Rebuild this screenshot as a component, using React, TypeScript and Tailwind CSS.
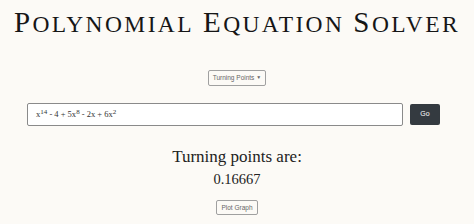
const TITLE = ['Polynomial', 'Equation', 'Solver']

export default function App() {
  return (
    <div className="w-[474px] h-[224px] bg-[#fcfaf6] overflow-hidden flex flex-col items-center" style={{ fontFamily: '"Liberation Serif", serif' }}>
      {/* Title in small caps */}
      <h1 className="mt-[5px] flex gap-[9px] leading-[34px] text-[#161616] tracking-[2.4px] whitespace-nowrap">
        {TITLE.map(word => (
          <span key={word}>
            <span className="text-[29px]">{word[0]}</span>
            <span className="text-[23.5px] uppercase">{word.slice(1)}</span>
          </span>
        ))}
      </h1>

      <button className="mt-[26px] h-[16px] px-[4px] flex items-center gap-[2px] border border-[#a0a0a0] rounded-[2px] text-[6.5px] text-[#666] bg-[#fcfaf6]" style={{ fontFamily: '"Liberation Sans", sans-serif' }}>
        Turning Points
        <span className="text-[5px]">▼</span>
      </button>

      <div className="mt-[17px] w-full flex items-center pl-[27px] gap-[7px]">
        <div className="w-[376px] h-[23px] bg-white border border-[#8a8a8a] rounded-[2px] flex items-center px-[8px] text-[8.5px] text-[#333]">
          <span>x<sup className="text-[7px]">14</sup> - 4 + 5x<sup className="text-[7px]">8</sup> - 2x + 6x<sup className="text-[7px]">2</sup></span>
        </div>
        <button className="w-[30px] h-[21px] bg-[#343a40] rounded-[2px] text-white text-[7px]" style={{ fontFamily: '"Liberation Sans", sans-serif' }}>
          Go
        </button>
      </div>

      <p className="mt-[21px] text-[17px] leading-[20px] text-[#222]">Turning points are:</p>
      <p className="mt-[3px] text-[14.5px] leading-[18px] text-[#222]">0.16667</p>

      <button className="mt-[12px] h-[15px] px-[4px] border border-[#a0a0a0] rounded-[2px] text-[6.5px] text-[#666]" style={{ fontFamily: '"Liberation Sans", sans-serif' }}>
        Plot Graph
      </button>
    </div>
  )
}
